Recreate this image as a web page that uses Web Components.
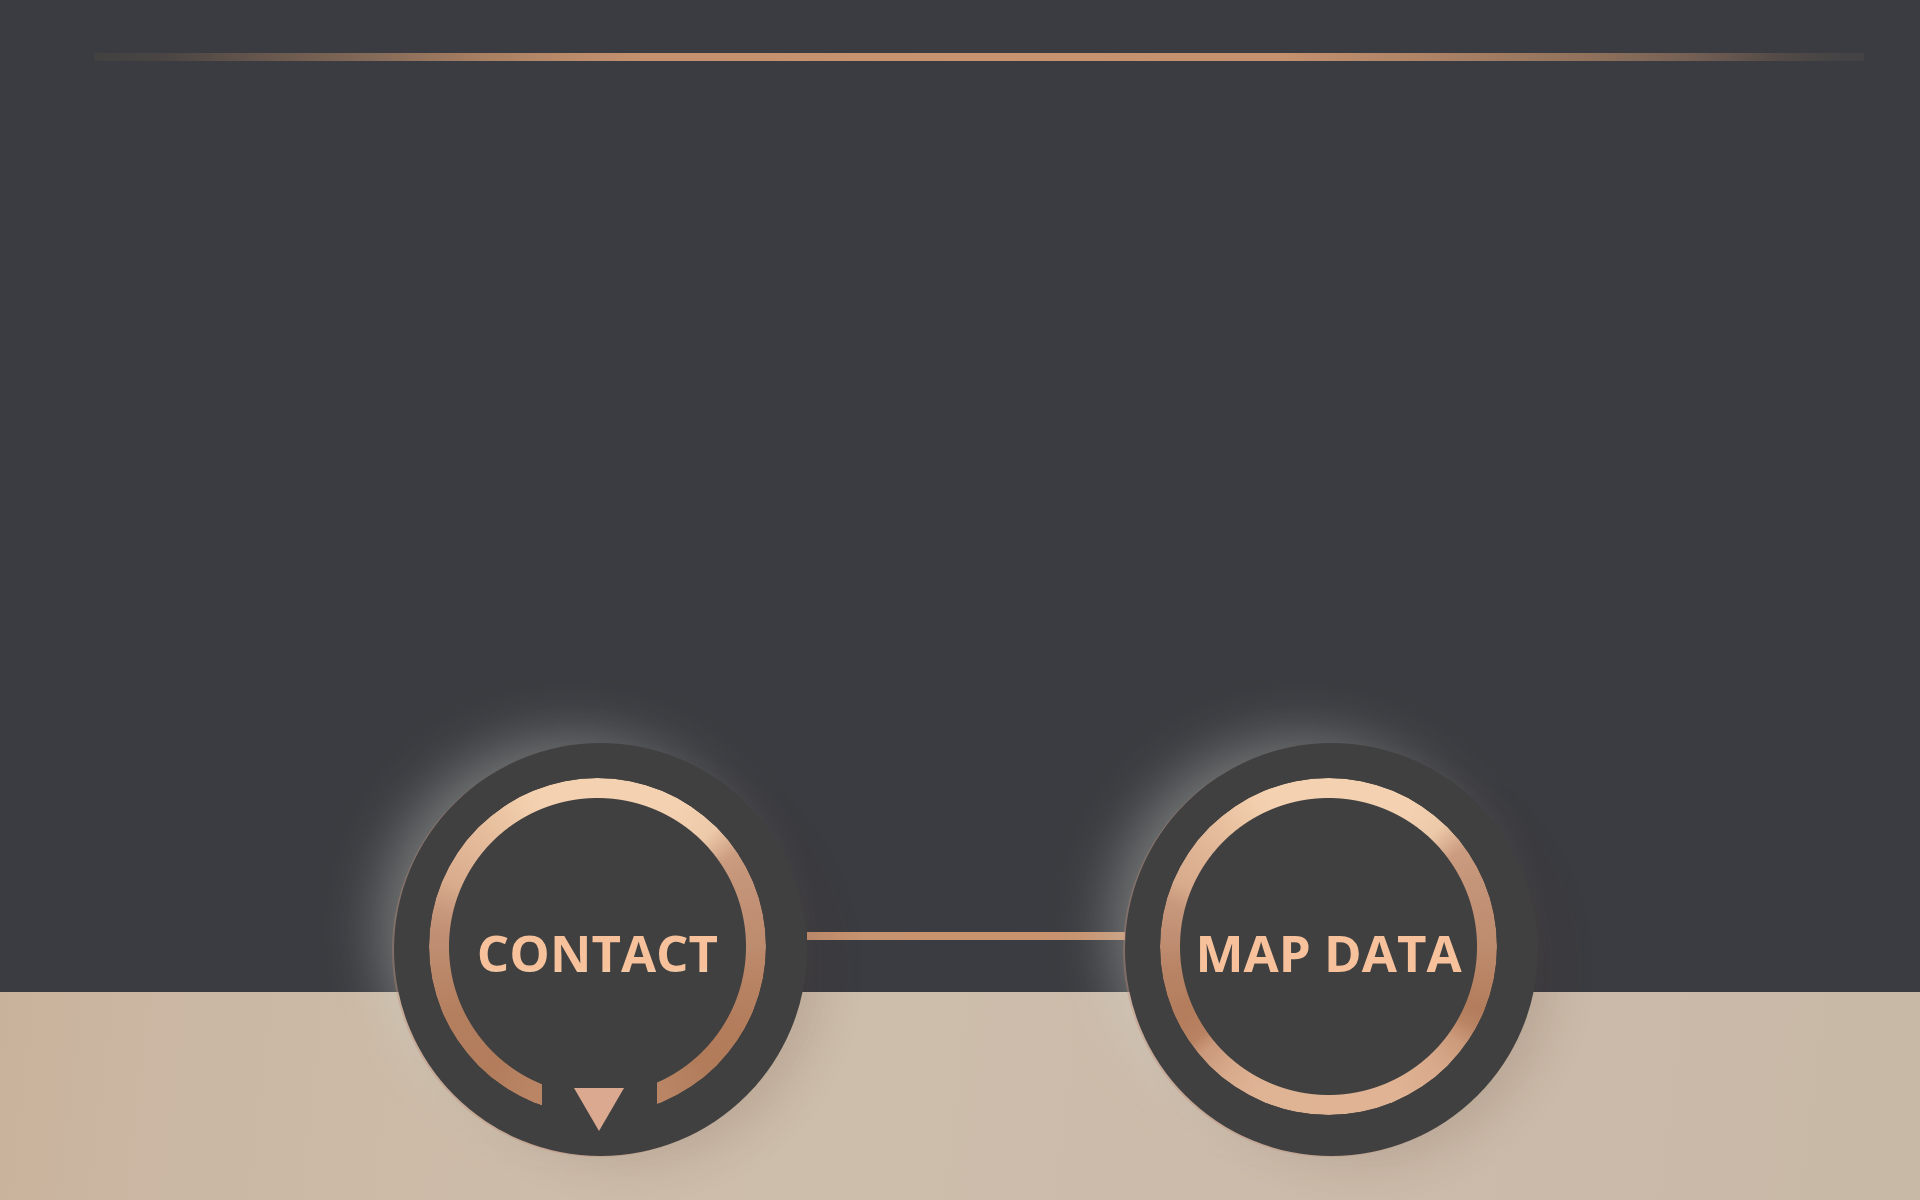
<!DOCTYPE html>
<html lang="en">
<head>
<meta charset="utf-8">
<meta name="viewport" content="width=device-width, initial-scale=1">
<title>Contact and map data</title>
<style>
  body { margin: 0; }
</style>
</head>
<body>
<page-stage>
  <copper-rule slot="rule"></copper-rule>
  <dial-nav slot="nav">
    <dial-button open>CONTACT</dial-button>
    <dial-link></dial-link>
    <dial-button>MAP DATA</dial-button>
  </dial-nav>
</page-stage>

<script>
  const define = (name, html) => {
    const template = document.createElement('template');
    template.innerHTML = html;
    customElements.define(name, class extends HTMLElement {
      constructor() {
        super();
        this.attachShadow({ mode: 'open' }).append(template.content.cloneNode(true));
      }
    });
  };

  define('page-stage', `
    <style>
      :host {
        display: grid;
        grid-template: minmax(0, 1fr) 208px / minmax(0, 1fr);
        min-height: 100vh;
        background: #3b3c41;
        font-family: "Open Sans", "Noto Sans", sans-serif;
        overflow: hidden;
      }
      header { grid-area: 1 / 1; padding: 53px 56px 0 94px; }
      .band {
        grid-area: 2 / 1;
        background: linear-gradient(97deg, #c9b29b 0%, #cab5a0 5%, #cbb9a5 15%, #cdbcaa 30%, #cdbdab 45%, #ccbbaa 60%, #cbbaa9 80%, #c8b8a6 100%);
      }
      main { grid-area: 1 / 1 / 3 / 2; align-self: end; padding: 0 0 44px 12px; }
    </style>
    <header><slot name="rule"></slot></header>
    <div class="band"></div>
    <main><slot name="nav"></slot></main>
  `);

  define('copper-rule', `
    <style>
      :host {
        display: block;
        height: 8px;
        background: linear-gradient(90deg, #424141 0%, #4a4543 4%, #6e5b50 11%, #856b59 16%, #a87f62 22%, #ba8b6a 27%, #c5916e 31%, #c8946f 50%, #c5916e 67%, #ab8165 76%, #8d705b 85%, #756055 90%, #544b47 95%, #464444 98%, #444343 100%);
      }
    </style>
  `);

  define('dial-nav', `
    <style>
      :host { display: block; }
      nav { display: flex; justify-content: center; align-items: flex-start; }
    </style>
    <nav><slot></slot></nav>
  `);

  define('dial-link', `
    <style>
      :host {
        display: block;
        width: 318px;
        height: 8px;
        margin-top: 189px;
        background: linear-gradient(90deg, #c49170, #c8946f 40%, #c7936f);
      }
    </style>
  `);

  define('dial-button', `
    <style>
      :host {
        display: block;
        position: relative;
        z-index: 1;
        flex: none;
        --ring: conic-gradient(#f4d2b1 0deg, #f4d2b1 30deg, #ecc9a8 43deg, #cc9c80 54deg, #c5957a 65deg, #bd8b6d 90deg, #b78262 105deg, #b37d5c 113deg, #b98464 119deg, #cb9a7b 126deg, #d8aa8b 138deg, #dfb393 155deg, #dfb495 205deg, #d9ab8d 218deg, #ca987a 230deg, #b98363 235deg, #b37d5c 245deg, #b98466 262deg, #c19074 275deg, #c8987d 285deg, #d7ab8b 293deg, #e0b596 308deg, #e8c19f 320deg, #f2cead 333deg, #f4d2b1 340deg);
      }
      :host([open]) {
        --ring: conic-gradient(#f4d2b1 0deg, #f4d2b1 30deg, #ecc9a8 45deg, #cc9c80 56deg, #c5957a 65deg, #bd8b6d 90deg, #b78262 105deg, #b37d5c 120deg, #b27c5b 138deg, #b98564 155deg, #b98564 205deg, #b37d5c 220deg, #b47f5f 245deg, #bb886a 262deg, #c19074 275deg, #c8987d 283deg, #d7ab8b 293deg, #e0b596 305deg, #e8c19f 320deg, #f2cead 333deg, #f4d2b1 340deg);
      }
      button {
        display: grid;
        grid-template: 413px / 413px;
        padding: 0;
        border: 0;
        border-radius: 50%;
        background: #404040;
        box-shadow:
          -2px 1px 0 0 rgba(190, 135, 115, .35),
          28px 20px 48px -16px rgba(80, 50, 35, .15),
          -30px -20px 60px -18px rgba(215, 220, 210, .4);
        font: bold 51px/70px "Open Sans", "Noto Sans", sans-serif;
        cursor: pointer;
      }
      .ring, .label, .notch { grid-area: 1 / 1; }
      .ring {
        width: 337px;
        height: 337px;
        margin: 35px 0 0 35px;
        border-radius: 50%;
        background: var(--ring);
        -webkit-mask: radial-gradient(closest-side, transparent 148px, #000 149px);
        mask: radial-gradient(closest-side, transparent 148px, #000 149px);
      }
      .label {
        place-self: center;
        padding: 4px 6px 0 0;
        color: #f6c19b;
        white-space: nowrap;
      }
      :host([open]) .label {
        color: transparent;
        background: linear-gradient(#f6c19b 74%, #f3cfae 82%);
        -webkit-background-clip: text;
        background-clip: text;
      }
      .notch {
        display: none;
        place-self: end center;
        width: 115px;
        height: 84px;
        margin-right: 2px;
        background: #404040;
        clip-path: inset(0 0 20px 0);
      }
      :host([open]) .notch { display: block; }
      svg { display: block; margin: 16px 0 0 32px; }
    </style>
    <button type="button">
      <span class="ring"></span>
      <span class="notch"><svg width="50" height="43" viewBox="0 0 50 43" aria-hidden="true"><path d="M0 0H50L25 43Z" fill="#dba98f"/></svg></span>
      <span class="label"><slot></slot></span>
    </button>
  `);
</script>
</body>
</html>
